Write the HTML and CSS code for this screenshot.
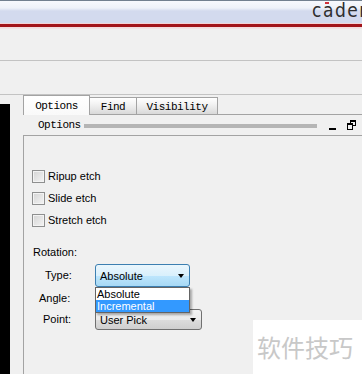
FILE: index.html
```html
<!DOCTYPE html>
<html>
<head>
<meta charset="utf-8">
<link rel="stylesheet" href="styles.css">
</head>
<body>
<div class="app">
  <header class="titlebar"><span class="logo">c<span class="logo-a">a</span>dence</span></header>
  <div class="redbar"></div>
  <div class="toolbar"></div>
  <div class="toolbar toolbar2"></div>
  <div class="main">
    <div class="canvas"></div>
    <div class="panel">
      <div class="tabs">
        <div class="tab tab-active">Options</div>
        <div class="tab tab-find">Find</div>
        <div class="tab tab-vis">Visibility</div>
        <div class="tab-fill"></div>
      </div>
      <div class="titlerow">
        <span class="title">Options</span>
        <span class="grip"></span>
        <span class="min"></span>
        <svg class="restore" width="9" height="10" viewBox="0 0 9 10">
          <rect x="3" y="0" width="6" height="2" fill="#000"/>
          <rect x="8" y="0" width="1" height="6" fill="#000"/>
          <rect x="6" y="5" width="3" height="1" fill="#000"/>
          <rect x="3" y="0" width="1" height="3" fill="#000"/>
          <rect x="0" y="3" width="6" height="2" fill="#000"/>
          <rect x="0" y="3" width="1" height="7" fill="#000"/>
          <rect x="5" y="3" width="1" height="7" fill="#000"/>
          <rect x="0" y="9" width="6" height="1" fill="#000"/>
        </svg>
      </div>
      <div class="content">
        <div class="check-row"><span class="checkbox"></span><span>Ripup etch</span></div>
        <div class="check-row"><span class="checkbox"></span><span>Slide etch</span></div>
        <div class="check-row"><span class="checkbox"></span><span>Stretch etch</span></div>
        <div class="group-label">Rotation:</div>
        <div class="form">
          <span class="lbl lbl-type">Type:</span>
          <div class="combo combo-focus"><span>Absolute</span><span class="arrow"></span></div>
          <span class="lbl lbl-angle">Angle:</span>
          <div></div>
          <span class="lbl lbl-point">Point:</span>
          <div class="combo combo-point"><span>User Pick</span><span class="arrow"></span></div>
          <ul class="droplist">
            <li>Absolute</li>
            <li class="selected">Incremental</li>
          </ul>
        </div>
      </div>
    </div>
  </div>
  <div class="watermark">软件技巧</div>
</div>
</body>
</html>
```

FILE: styles.css
```css
* { box-sizing: border-box; }
html, body { margin: 0; padding: 0; }
body {
  width: 362px;
  height: 374px;
  overflow: hidden;
  background: #f0f0f0;
  font-family: "Liberation Sans", Arial, sans-serif;
  font-size: 11px;
  color: #000;
}
.app {
  position: relative;
  width: 362px;
  height: 374px;
  overflow: hidden;
  display: flex;
  flex-direction: column;
}
.titlebar {
  height: 23px;
  flex: none;
  background: linear-gradient(#72808f 0, #72808f 1px, #f7f9fd 1px, #eef2f9 8px, #d3daee 11px, #d3daee 23px);
  padding-left: 312px;
  white-space: nowrap;
  overflow: hidden;
}
.logo {
  display: inline-block;
  font-family: "DejaVu Sans", sans-serif;
  font-stretch: condensed;
  font-size: 19px;
  line-height: 23px;
  letter-spacing: 1.5px;
  color: #2e2e2e;
  margin-top: -1px;
}
.logo-a { position: relative; }
.logo-a::before {
  content: "";
  position: absolute;
  left: 2px;
  top: 3px;
  width: 4px;
  height: 2px;
  background: #d0313a;
}
.redbar {
  height: 6px;
  flex: none;
  background: linear-gradient(#f3d3d7 0, #f3d3d7 1px, #a2151b 1px, #a2151b 4px, #f4d8db 4px, #f1e6e7 6px);
}
.toolbar {
  height: 32px;
  flex: none;
  border-bottom: 1px solid #c3c3c3;
}
.toolbar2 { height: 34px; }
.main {
  flex: 1;
  display: flex;
  min-height: 0;
}
.canvas {
  width: 10px;
  margin-top: 9px;
  background: #000;
  flex: none;
}
.panel {
  margin-left: 13px;
  flex: 1;
  display: flex;
  flex-direction: column;
  min-width: 0;
}
.tabs {
  display: flex;
  height: 20px;
  flex: none;
  font-family: "Liberation Mono", monospace;
  font-size: 11px;
  letter-spacing: -0.5px;
}
.tab {
  display: flex;
  align-items: center;
  justify-content: center;
}
.tab-active {
  width: 67px;
  height: 20px;
  border: 1px solid #a3a3a3;
  border-bottom: none;
  background: linear-gradient(#ffffff, #f9f9f9);
  padding-top: 1px;
}
.tab-find, .tab-vis {
  margin-top: 2px;
  height: 18px;
  border-top: 1px solid #a3a3a3;
  border-right: 1px solid #a3a3a3;
  border-bottom: 1px solid #a3a3a3;
  background: linear-gradient(#ffffff, #f2f2f2 40%, #d9d9d9);
  padding-top: 1px;
}
.tab-find { width: 47px; }
.tab-vis { width: 81px; }
.tab-fill {
  flex: 1;
  border-bottom: 1px solid #a3a3a3;
}
.titlerow {
  height: 20px;
  flex: none;
  display: flex;
  align-items: center;
}
.title {
  font-family: "Liberation Mono", monospace;
  font-size: 11px;
  letter-spacing: -0.5px;
  padding-left: 15px;
  width: 61px;
}
.grip {
  width: 233px;
  height: 4px;
  background: #b5b5b5;
  margin-top: 1px;
}
.min {
  width: 7px;
  height: 2px;
  background: #000;
  margin-left: 12px;
  margin-top: 8px;
}
.restore {
  margin-left: 11px;
  margin-top: 0px;
  display: block;
}
.content {
  flex: 1;
  border-top: 1px solid #a3a3a3;
  border-left: 1px solid #a3a3a3;
  padding: 29px 0 0 8px;
}
.check-row {
  height: 22px;
  display: flex;
  align-items: center;
  gap: 3px;
}
.checkbox {
  width: 13px;
  height: 13px;
  border: 1px solid #8e8f8f;
  background: linear-gradient(135deg, #d4d4d4, #f4f4f4);
  box-shadow: inset 0 0 0 1px #f3f3f3;
}
.group-label {
  margin-top: 15px;
  line-height: 13px;
  padding-left: 1px;
}
.form {
  position: relative;
  margin-top: 5px;
  margin-left: -8px;
  display: grid;
  grid-template-columns: 71px auto;
  grid-template-rows: 23px 22px 21px;
  justify-items: start;
  align-items: center;
}
.lbl { line-height: 13px; }
.lbl-type { padding-left: 21px; }
.lbl-angle { padding-left: 15px; }
.lbl-point { padding-left: 19px; }
.combo {
  display: flex;
  align-items: center;
  justify-content: space-between;
  padding: 0 5px 0 4px;
  border-radius: 3px;
}
.combo-focus {
  width: 95px;
  height: 23px;
  border: 1px solid #3c7fb1;
  background: linear-gradient(#eaf6fd, #d9f0fc 50%, #bee6fd 50%, #a7d9f5);
}
.combo-point {
  width: 107px;
  height: 21px;
  border: 1px solid #707070;
  background: linear-gradient(#f2f2f2, #ebebeb 50%, #dddddd 50%, #cfcfcf);
}
.arrow {
  width: 0;
  height: 0;
  border-left: 3.5px solid transparent;
  border-right: 3.5px solid transparent;
  border-top: 4px solid #000;
}
.droplist {
  position: absolute;
  left: 71px;
  top: 23px;
  width: 95px;
  margin: 0;
  padding: 0;
  list-style: none;
  background: #fff;
  border: 1px solid #646464;
  box-shadow: 2px 2px 2px rgba(0, 0, 0, 0.3);
}
.droplist li {
  height: 12px;
  line-height: 12px;
  padding-left: 1px;
}
.droplist .selected {
  background: #3399ff;
  color: #fff;
}
.watermark {
  position: absolute;
  right: 0;
  bottom: 0;
  width: 109px;
  height: 54px;
  background: #fff;
  font-family: "Noto Sans CJK SC", sans-serif;
  font-size: 24px;
  line-height: 54px;
  color: #c8c8c8;
  padding-left: 4px;
  white-space: nowrap;
}
```
